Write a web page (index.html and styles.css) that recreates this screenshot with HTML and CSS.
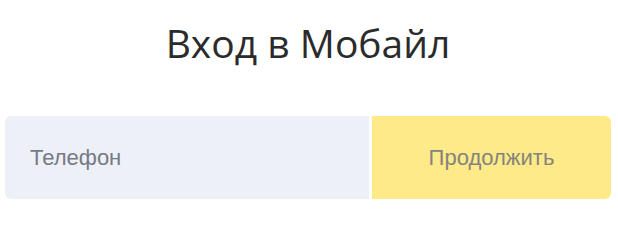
FILE: index.html
```html
<!DOCTYPE html>
<html>
<head>
    <meta charset="utf-8" />
    <meta name="viewport" content="width=device-width,initial-scale=1" />
    <title>Вход в Мобайл</title>
    <link rel="stylesheet" href="styles.css">
</head>
<body>
    <div id="login">
        <h1>Вход в Мобайл</h1>
        <form class="row">
            <input type="tel" placeholder="Телефон">
            <button type="button">Продолжить</button>
        </form>
    </div>
</body>
</html>
```

FILE: styles.css
```css
* {margin: 0; padding: 0; box-sizing: border-box;}
body {background: #fff; padding: 0 7px 0 5px;}

#login {
    display: flex;
    flex-flow: column;
    align-items: stretch;
}

h1 {
    font-family: "Open Sans", sans-serif;
    font-weight: 400;
    font-size: 39px;
    line-height: 52px;
    color: #2b2b2b;
    text-align: center;
    margin-top: 17px;
    margin-bottom: 47px;
}

.row {
    display: flex;
    gap: 3px;
    height: 83px;
}

input {
    flex: 1 1 auto;
    width: 364px;
    background: #edf0f6;
    border: 0;
    outline: 0;
    border-radius: 6px 0 0 6px;
    padding: 0 25px;
    font-family: "Liberation Sans", Arial, sans-serif;
    font-size: 22px;
    color: #333;
}
input::placeholder {color: #767a84;}

button {
    flex: 0 0 239px;
    background: #ffea8a;
    border: 0;
    border-radius: 0 6px 6px 0;
    font-family: "Liberation Sans", Arial, sans-serif;
    font-size: 22px;
    color: #85847c;
}
```
